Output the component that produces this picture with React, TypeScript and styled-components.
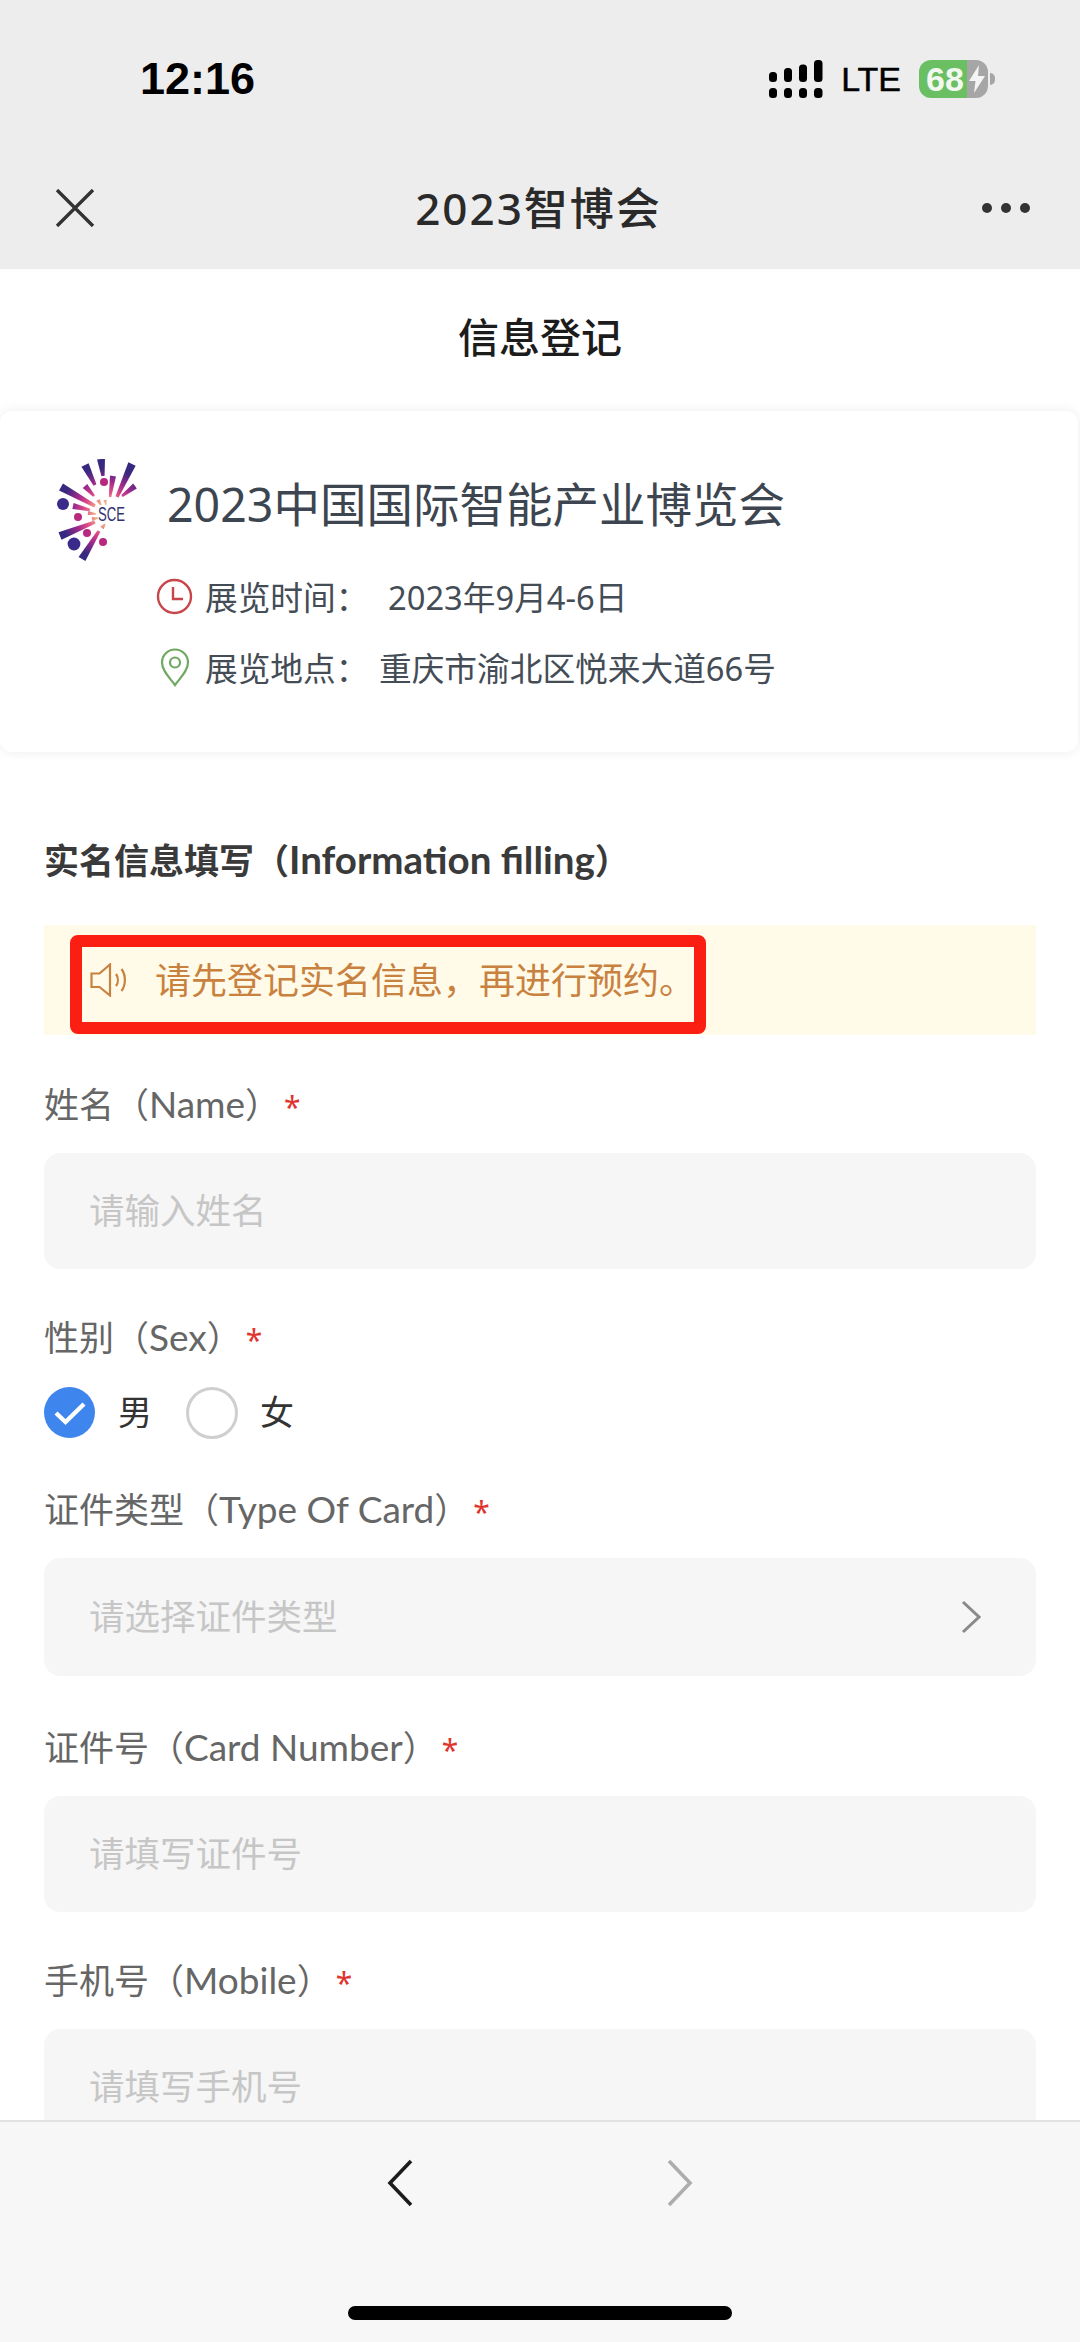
import React from "react";
import styled, { createGlobalStyle } from "styled-components";

const fontStack = `"Noto Sans", "Noto Sans CJK SC", sans-serif`;
const labelStack = `Lato, "Noto Sans CJK SC", sans-serif`;

const GlobalStyle = createGlobalStyle`
  html, body {
    margin: 0;
    padding: 0;
    background: #fff;
    font-family: ${fontStack};
  }
  * {
    box-sizing: border-box;
  }
`;

const App: React.FC = () => {
  return (
    <Page>
      <GlobalStyle />
      <TopBar>
        <StatusRow>
          <Clock>12:16</Clock>
          <StatusIcons>
            <SignalIcon />
            <Lte>LTE</Lte>
            <Battery>
              68
              <BoltIcon />
            </Battery>
          </StatusIcons>
        </StatusRow>
        <NavRow>
          <svg width="40" height="38" viewBox="0 0 40 38">
            <path d="M2 1 L38 37 M38 1 L2 37" stroke="#333" strokeWidth="3.4" fill="none" />
          </svg>
          <NavTitle>2023智博会</NavTitle>
          <Dots>
            <i />
            <i />
            <i />
          </Dots>
        </NavRow>
      </TopBar>

      <Content>
        <PageTitle>信息登记</PageTitle>
        <ExpoCard>
          <ExpoHead>
            <Logo />
            <ExpoName>2023中国国际智能产业博览会</ExpoName>
          </ExpoHead>
          <InfoRow $top={11}>
            <InfoIcon>
              <svg width="37" height="37" viewBox="0 0 37 37" fill="none" stroke="#c8464b" strokeWidth="2.4">
                <circle cx="18.5" cy="18.5" r="16.5" />
                <path d="M17 9 V21 H27" />
              </svg>
            </InfoIcon>
            <InfoLabel>展览时间：</InfoLabel>
            <InfoValue $offset={18}>2023年9月4-6日</InfoValue>
          </InfoRow>
          <InfoRow $top={25}>
            <InfoIcon>
              <svg width="30" height="39" viewBox="0 0 30 39" fill="none" stroke="#6fa860" strokeWidth="2.2">
                <path d="M15 37 C10 30 2 23 2 14.5 C2 7 8 1.5 15 1.5 C22 1.5 28 7 28 14.5 C28 23 20 30 15 37 Z" />
                <circle cx="15" cy="14.5" r="5" />
              </svg>
            </InfoIcon>
            <InfoLabel>展览地点：</InfoLabel>
            <InfoValue $offset={9}>重庆市渝北区悦来大道66号</InfoValue>
          </InfoRow>
        </ExpoCard>

        <FormBody>
          <SectionTitle>
            实名信息填写（<SectionLatin>Information filling</SectionLatin>）
          </SectionTitle>
          <Notice>
            <svg width="38" height="34" viewBox="0 0 38 34" fill="none" stroke="#c9813f" strokeWidth="2.2">
              <path d="M1.5 10.5 H9.5 L20 1.5 V32.5 L9.5 24 H1.5 Z" />
              <path d="M26 11 C28.5 14.5 28.5 19.5 26 23" />
              <path d="M31.5 6 C36 12 36 22 31.5 28" />
            </svg>
            <NoticeText>请先登记实名信息，再进行预约。</NoticeText>
            <Highlight />
          </Notice>

          <Field $gap={44}>
            <Label>
              姓名（<LabelLatin>Name</LabelLatin>）
              <Star>*</Star>
            </Label>
            <InputBox $height={116}>请输入姓名</InputBox>
          </Field>

          <Field $gap={47}>
            <Label $tight>
              性别（<LabelLatin>Sex</LabelLatin>）
              <Star>*</Star>
            </Label>
            <RadioRow>
              <RadioOn>
                <svg width="34" height="26" viewBox="0 0 34 26" fill="none">
                  <path d="M3 13 L12.5 22 L31 4" stroke="#fff" strokeWidth="4.4" />
                </svg>
              </RadioOn>
              <RadioText>男</RadioText>
              <RadioOff />
              <RadioText $left={22}>女</RadioText>
            </RadioRow>
          </Field>

          <Field $gap={47}>
            <Label>
              证件类型（<LabelLatin>Type Of Card</LabelLatin>）
              <Star>*</Star>
            </Label>
            <InputBox $height={118}>
              请选择证件类型
              <ChevronSlot>
                <svg width="20" height="34" viewBox="0 0 20 34" fill="none">
                  <path d="M2 2 L18 17 L2 32" stroke="#8a8a8a" strokeWidth="3" />
                </svg>
              </ChevronSlot>
            </InputBox>
          </Field>

          <Field $gap={44}>
            <Label>
              证件号（<LabelLatin>Card Number</LabelLatin>）
              <Star>*</Star>
            </Label>
            <InputBox $height={116}>请填写证件号</InputBox>
          </Field>

          <Field $gap={0}>
            <Label>
              手机号（<LabelLatin>Mobile</LabelLatin>）
              <Star>*</Star>
            </Label>
            <InputBox $height={116}>请填写手机号</InputBox>
          </Field>
        </FormBody>
      </Content>

      <BottomBar>
        <Arrows>
          <svg width="28" height="48" viewBox="0 0 28 48" fill="none">
            <path d="M25 2 L4 24 L25 46" stroke="#1c1c1c" strokeWidth="3.6" />
          </svg>
          <svg width="28" height="48" viewBox="0 0 28 48" fill="none">
            <path d="M3 2 L24 24 L3 46" stroke="#adadad" strokeWidth="3.6" />
          </svg>
        </Arrows>
        <HomeBar />
      </BottomBar>
    </Page>
  );
};

const SignalIcon: React.FC = () => (
  <svg width="54" height="38" viewBox="0 0 54 38" fill="#000">
    <rect x="0" y="12" width="8" height="10" rx="3.5" />
    <rect x="15" y="8" width="8" height="14" rx="3.5" />
    <rect x="30" y="4.5" width="8" height="17.5" rx="3.5" />
    <rect x="45" y="0" width="8.5" height="22" rx="3.5" />
    <rect x="0" y="28" width="8" height="10" rx="3.5" />
    <rect x="15" y="28" width="8" height="10" rx="3.5" />
    <rect x="30" y="28" width="8" height="10" rx="3.5" />
    <rect x="45" y="28" width="8.5" height="10" rx="3.5" />
  </svg>
);

const BoltIcon: React.FC = () => (
  <BoltSlot>
    <svg width="16" height="28" viewBox="0 0 16 28" fill="#f4f4f4">
      <path d="M10 0 L0 16 H6.5 L5 28 L16 11 H9 Z" />
    </svg>
  </BoltSlot>
);

// ray goes from outer end (thick) to inner end (thin)
const rayPoints = (x1: number, y1: number, x2: number, y2: number, w: number) => {
  const len = Math.hypot(x2 - x1, y2 - y1);
  const nx = -(y2 - y1) / len;
  const ny = (x2 - x1) / len;
  const a = w / 2;
  const b = w * 0.2;
  return [
    [x1 + nx * a, y1 + ny * a],
    [x2 + nx * b, y2 + ny * b],
    [x2 - nx * b, y2 - ny * b],
    [x1 - nx * a, y1 - ny * a],
  ]
    .map((p) => p.join(","))
    .join(" ");
};

// logo, coordinates follow the reference at 1:1 px
const Logo: React.FC = () => {
  const rays: [number, number, number, number, number][] = [
    [55, 25, 65, 45, 8],
    [71, 19, 73, 36, 8],
    [102, 24, 87, 57, 8],
    [83, 36, 80, 57, 6],
    [105, 46, 92, 56, 6],
    [55, 46, 64, 56, 6],
    [31, 47, 65, 66, 8],
    [43, 66, 60, 70, 6],
    [30, 96, 65, 82, 8],
    [52, 119, 69, 91, 8],
    [58, 73, 66, 74, 4],
    [62, 79, 68, 78, 4],
    [68, 60, 71, 65, 4],
    [72, 88, 75, 84, 4],
    [75, 60, 76, 65, 3],
  ];
  const dots: [number, number, number, string][] = [
    [74, 42, 4, "#b8287f"],
    [33, 64, 6, "#3a2a8a"],
    [48, 77, 4, "#b8287f"],
    [57, 93, 4, "#b8287f"],
    [44, 104, 6.4, "#3a2a8a"],
    [73, 102, 4, "#b8287f"],
  ];
  return (
    <svg width="82" height="103" viewBox="26 19 82 103" style={{ flexShrink: 0 }}>
      <defs>
        <radialGradient id="rayGrad" gradientUnits="userSpaceOnUse" cx="76" cy="73" r="58">
          <stop offset="0.15" stopColor="#f6c48a" />
          <stop offset="0.38" stopColor="#dd4a86" />
          <stop offset="0.55" stopColor="#a02a8c" />
          <stop offset="0.78" stopColor="#38287f" />
        </radialGradient>
      </defs>
      {rays.map(([x1, y1, x2, y2, w], i) => (
        <polygon key={i} points={rayPoints(x1, y1, x2, y2, w)} fill="url(#rayGrad)" />
      ))}
      {dots.map(([cx, cy, r, fill], i) => (
        <circle key={i} cx={cx} cy={cy} r={r} fill={fill} />
      ))}
      <text
        x="68"
        y="81"
        fontSize="20"
        fill="#35306e"
        fontFamily="Liberation Sans, sans-serif"
        textLength={27}
        lengthAdjust="spacingAndGlyphs"
      >
        SCE
      </text>
    </svg>
  );
};

export default App;

// --- Styled Components ---
const Page = styled.div`
  width: 1080px;
  height: 2342px;
  display: flex;
  flex-direction: column;
  overflow: hidden;
  background: #fff;
`;

const TopBar = styled.header`
  background: #ededed;
  flex-shrink: 0;
`;

const StatusRow = styled.div`
  height: 147px;
  padding: 52px 85px 0 140px;
  display: flex;
  justify-content: space-between;
  align-items: flex-start;
`;

const Clock = styled.div`
  font-family: "Liberation Sans", sans-serif;
  font-size: 45px;
  font-weight: 700;
  line-height: 54px;
  color: #000;
`;

const StatusIcons = styled.div`
  display: flex;
  align-items: center;
  height: 54px;
  gap: 18px;
`;

const Lte = styled.span`
  font-family: "Liberation Sans", sans-serif;
  font-size: 34px;
  font-weight: 400;
  color: #000;
  -webkit-text-stroke: 0.5px #000;
`;

const Battery = styled.div`
  position: relative;
  width: 69px;
  height: 38px;
  margin-right: 7px;
  padding-left: 7px;
  border-radius: 12px;
  background: linear-gradient(90deg, #69bf62 70%, #a6a6a6 70%);
  color: #f2f8f0;
  font-family: "Liberation Sans", sans-serif;
  font-size: 34px;
  font-weight: 700;
  line-height: 38px;

  &::after {
    content: "";
    position: absolute;
    right: -7px;
    top: 13px;
    width: 5px;
    height: 12px;
    border-radius: 0 6px 6px 0;
    background: #a6a6a6;
  }
`;

const BoltSlot = styled.span`
  position: absolute;
  left: 50px;
  top: 5px;
  line-height: 0;
`;

const NavRow = styled.div`
  height: 122px;
  padding: 0 50px 0 55px;
  display: flex;
  justify-content: space-between;
  align-items: center;
`;

const NavTitle = styled.div`
  padding-bottom: 4px;
  font-size: 44px;
  font-weight: 500;
  letter-spacing: 2px;
  color: #2a2a2a;
`;

const Dots = styled.div`
  display: flex;
  gap: 9px;

  i {
    width: 10px;
    height: 10px;
    border-radius: 50%;
    background: #333;
  }
`;

const Content = styled.main`
  flex: 1;
  min-height: 0;
  overflow: hidden;
`;

const PageTitle = styled.h1`
  margin: 0;
  height: 142px;
  padding-bottom: 11px;
  display: flex;
  align-items: center;
  justify-content: center;
  font-size: 41px;
  font-weight: 500;
  color: #1c1c1c;
`;

const ExpoCard = styled.section`
  height: 341px;
  margin-right: 2px;
  padding: 48px 0 0 56px;
  background: #fff;
  border-radius: 12px;
  box-shadow: 0 0 12px rgba(0, 0, 0, 0.08);
`;

const ExpoHead = styled.div`
  display: flex;
  align-items: flex-start;
  gap: 29px;
  height: 103px;
`;

const ExpoName = styled.div`
  font-size: 46.5px;
  line-height: 64px;
  margin-top: 13px;
  color: #3d4650;
  white-space: nowrap;
`;

const InfoRow = styled.div<{ $top: number }>`
  display: flex;
  align-items: center;
  height: 46px;
  margin-top: ${(p) => p.$top}px;
  padding-left: 100px;
  font-size: 32.7px;
  color: #444c55;
  white-space: nowrap;
`;

const InfoIcon = styled.span`
  width: 37px;
  margin-right: 12px;
  display: flex;
  justify-content: center;
  flex-shrink: 0;
`;

const InfoLabel = styled.span`
  width: 165px;
`;

const InfoValue = styled.span<{ $offset: number }>`
  margin-left: ${(p) => p.$offset}px;
`;

const FormBody = styled.div`
  padding: 83px 44px 0 44px;
`;

const SectionTitle = styled.h2`
  margin: 0;
  height: 48px;
  line-height: 48px;
  font-family: ${labelStack};
  font-size: 35px;
  font-weight: 700;
  color: #3a3a3a;
  white-space: nowrap;
`;

const SectionLatin = styled.span`
  font-size: 38.5px;
`;

const Notice = styled.div`
  position: relative;
  height: 110px;
  margin: 42px 0 45px 0;
  padding-left: 46px;
  display: flex;
  align-items: center;
  gap: 27px;
  background: #fffbe8;
`;

const NoticeText = styled.span`
  padding-bottom: 3px;
  font-size: 36px;
  color: #c9813f;
  white-space: nowrap;
`;

// annotation box laid over the notice in the screenshot
const Highlight = styled.div`
  position: absolute;
  left: 26px;
  top: 10px;
  width: 636px;
  height: 99px;
  border: 12px solid #fb1e13;
  border-radius: 8px;
`;

const Field = styled.div<{ $gap: number }>`
  margin-bottom: ${(p) => p.$gap}px;
`;

const Label = styled.div<{ $tight?: boolean }>`
  height: 48px;
  line-height: 48px;
  margin-bottom: ${(p) => (p.$tight ? 26 : 25)}px;
  font-family: ${labelStack};
  font-size: 35px;
  color: #666;
  white-space: nowrap;
`;

const LabelLatin = styled.span`
  font-size: 37px;
`;

const Star = styled.span`
  margin-left: 4px;
  font-family: "Noto Sans", sans-serif;
  font-size: 30px;
  color: #e0342f;
`;

const InputBox = styled.div<{ $height: number }>`
  position: relative;
  height: ${(p) => p.$height}px;
  padding: 0 0 5px 45px;
  display: flex;
  align-items: center;
  border-radius: 16px;
  background: #f6f6f6;
  font-size: 35.5px;
  color: #c6c6c6;
`;

const ChevronSlot = styled.span`
  position: absolute;
  right: 55px;
  top: 50%;
  transform: translateY(-50%);
  line-height: 0;
`;

const RadioRow = styled.div`
  display: flex;
  align-items: center;
  height: 51px;
`;

const RadioOn = styled.span`
  width: 51px;
  height: 51px;
  border-radius: 50%;
  background: #3e86ee;
  display: flex;
  align-items: center;
  justify-content: center;
`;

const RadioOff = styled.span`
  width: 52px;
  height: 52px;
  margin-left: 34px;
  border-radius: 50%;
  border: 3px solid #cfcfcf;
`;

const RadioText = styled.span<{ $left?: number }>`
  margin-left: ${(p) => p.$left ?? 23}px;
  padding-bottom: 5px;
  font-size: 34px;
  color: #333;
`;

const BottomBar = styled.footer`
  flex-shrink: 0;
  height: 222px;
  padding-top: 37px;
  background: #f7f7f7;
  border-top: 2px solid #e2e2e2;
  display: flex;
  flex-direction: column;
  align-items: center;
`;

const Arrows = styled.div`
  display: flex;
  gap: 252px;
`;

const HomeBar = styled.div`
  width: 384px;
  height: 14px;
  margin-top: 99px;
  border-radius: 7px;
  background: #000;
`;
